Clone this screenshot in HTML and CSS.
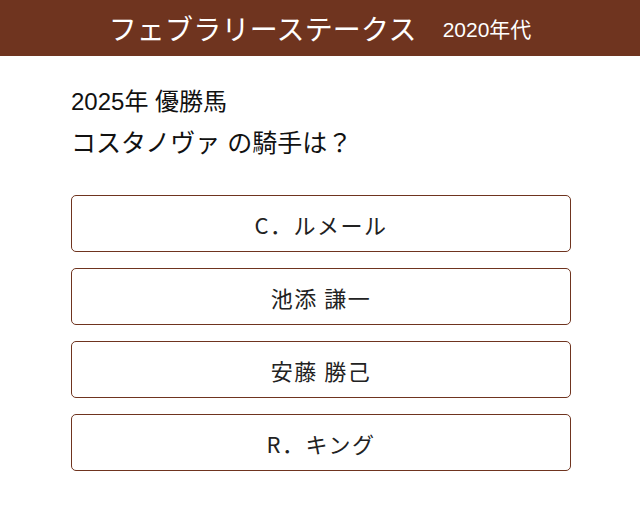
FILE: index.html
```html
<!DOCTYPE html>
<html lang="ja">
<head>
<meta charset="utf-8">
<link rel="stylesheet" href="styles.css">
</head>
<body>
<header class="header">
  <span class="title">フェブラリーステークス</span>
  <span class="era">2020年代</span>
</header>
<main class="main">
  <div class="question">
    <div class="q1">2025年 優勝馬</div>
    <div class="q2">コスタノヴァ の騎手は？</div>
  </div>
  <div class="choices">
    <button class="choice">C．ルメール</button>
    <button class="choice">池添 謙一</button>
    <button class="choice">安藤 勝己</button>
    <button class="choice">R．キング</button>
  </div>
</main>
</body>
</html>
```
FILE: styles.css
```css
html, body {
  margin: 0;
  padding: 0;
  background: #ffffff;
}
body {
  font-family: "Liberation Sans", "Noto Sans CJK JP", sans-serif;
  color: #111;
}
.header {
  height: 56px;
  background: #6f341f;
  color: #fff;
  display: flex;
  align-items: center;
  justify-content: center;
  gap: 26px;
}
.title {
  font-size: 28px;
  letter-spacing: 0.2px;
}
.era {
  font-size: 21px;
}
.main {
  padding: 30px 71px 0 71px;
}
.question {
  display: flex;
  flex-direction: column;
  gap: 8px;
}
.q1 {
  font-size: 24px;
  line-height: 32px;
}
.q2 {
  font-size: 25px;
  line-height: 34px;
}
.choices {
  margin-top: 35px;
  display: flex;
  flex-direction: column;
  gap: 16px;
}
.choice {
  width: 500px;
  height: 57px;
  background: #fff;
  border: 1px solid #6f341f;
  border-radius: 5px;
  font-family: "Noto Sans CJK JP", sans-serif;
  font-size: 22px;
  color: #222;
  letter-spacing: 1.5px;
  padding: 0;
}
```
